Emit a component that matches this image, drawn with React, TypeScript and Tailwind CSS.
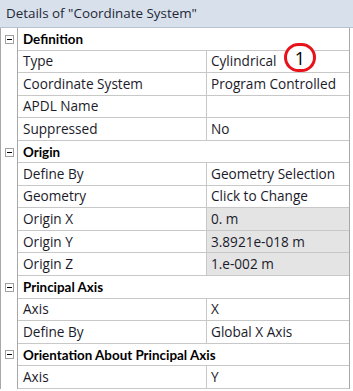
import React from "react";

type Row =
  | { kind: "group"; label: string }
  | { kind: "prop"; name: string; value: string; shaded?: boolean; mark?: boolean };

const rows: Row[] = [
  { kind: "group", label: "Definition" },
  { kind: "prop", name: "Type", value: "Cylindrical", mark: true },
  { kind: "prop", name: "Coordinate System", value: "Program Controlled" },
  { kind: "prop", name: "APDL Name", value: "" },
  { kind: "prop", name: "Suppressed", value: "No" },
  { kind: "group", label: "Origin" },
  { kind: "prop", name: "Define By", value: "Geometry Selection" },
  { kind: "prop", name: "Geometry", value: "Click to Change" },
  { kind: "prop", name: "Origin X", value: "0. m", shaded: true },
  { kind: "prop", name: "Origin Y", value: "3.8921e-018 m", shaded: true },
  { kind: "prop", name: "Origin Z", value: "1.e-002 m", shaded: true },
  { kind: "group", label: "Principal Axis" },
  { kind: "prop", name: "Axis", value: "X" },
  { kind: "prop", name: "Define By", value: "Global X Axis" },
  { kind: "group", label: "Orientation About Principal Axis" },
  { kind: "prop", name: "Axis", value: "Y" },
];

function Minus() {
  return (
    <div className="w-[9px] h-[9px] border border-[#a0a0a0] bg-white flex items-center justify-center">
      <div className="w-[5px] h-[1px] bg-black" />
    </div>
  );
}

export default function App() {
  return (
    <div
      className="w-[353px] h-[391px] overflow-hidden bg-white text-[#1b1b2a]"
      style={{ fontFamily: '"Open Sans", "Noto Sans", sans-serif' }}
    >
      <div className="h-[28px] bg-[#d8e0eb] border-b border-[#b9c3d0] flex items-center pl-[6px] text-[13.4px] text-[#1e2838]">
        Details of "Coordinate System"
      </div>
      <div className="w-[350px] border-l border-r border-[#a8a8a8] text-[13.6px]">
        {rows.map((r, i) => (
          <div key={i} className="flex h-[22.56px]">
            <div className="w-[17px] shrink-0 border-r border-[#a8a8a8] flex items-center justify-center">
              {r.kind === "group" && <Minus />}
            </div>
            {r.kind === "group" ? (
              <div
                className="flex-1 border-b border-[#c8c8c8] flex items-center pl-[5px] pt-[1px] font-bold text-black text-[13.4px]"
                style={{ fontFamily: 'Lato, "Open Sans", sans-serif' }}
              >
                {r.label}
              </div>
            ) : (
              <>
                <div className="w-[189px] shrink-0 border-b border-r border-[#c8c8c8] flex items-center pl-[5px]">
                  {r.name}
                </div>
                <div
                  className={`flex-1 border-b border-[#c8c8c8] flex items-center pl-[4px] relative ${
                    r.shaded ? "bg-[#e4e4e4]" : ""
                  }`}
                >
                  {r.value}
                  {r.mark && (
                    <div className="absolute left-[77px] top-[-8px] w-[32px] h-[29px] rounded-full border-[3px] border-[#e8121b] bg-white flex items-center justify-center text-[18px] text-black leading-none pt-[1px]">
                      1
                    </div>
                  )}
                </div>
              </>
            )}
          </div>
        ))}
      </div>
    </div>
  );
}
